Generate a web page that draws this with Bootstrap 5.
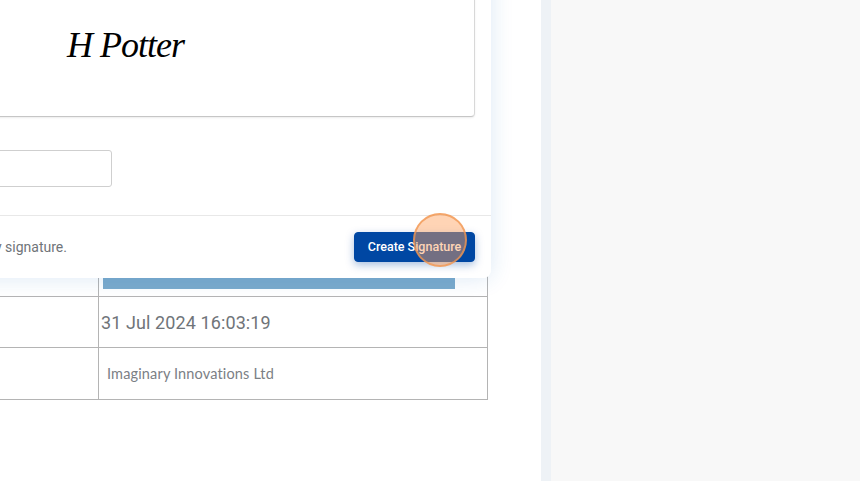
<!DOCTYPE html>
<html lang="en">

<head>
    <meta charset="UTF-8">
    <meta name="viewport" content="width=device-width, initial-scale=1">
    <title>Create Signature</title>
    <link href="https://cdn.jsdelivr.net/npm/bootstrap@5.3.3/dist/css/bootstrap.min.css" rel="stylesheet">
    <style>
        body { height: 481px; overflow: hidden; background: #f8f8f8; font-family: "Roboto", sans-serif; }
        .doc-area { width: 541px; height: 481px; flex: none; overflow: hidden; background: #fff; }
        .doc-strip { width: 10px; flex: none; background: #eef2f6; }
        .doc-table-wrap { margin-left: -200px; width: 688px; padding-top: 60px; }
        .doc-table { table-layout: fixed; width: 688px; margin: 0; border-color: #b4b4b4; }
        .doc-table td { padding: 0; border-color: #b4b4b4; color: #6f7479; }
        .doc-table tr:last-child td { border-bottom-color: #cfcfcf; }
        .cell-first { width: 298px; }
        .sig-bar-row td { height: 236px; vertical-align: bottom; padding: 0 32px 7px 4px !important; }
        .sig-bar { height: 200px; background: #7baacc; }
        .date-cell { height: 51px; padding-left: 2px !important; vertical-align: middle; font-size: 18px; letter-spacing: .1px; }
        .company-cell { height: 52px; padding-left: 8px !important; vertical-align: middle; font-family: "Lato", sans-serif; font-size: 14.5px; letter-spacing: .15px; color: #7b8085 !important; }
        .sig-modal { top: -40px; left: -300px; width: 791px; border: 0; border-radius: 8px; box-shadow: 0 0 22px rgba(30, 110, 190, .16); }
        .sig-modal .card-body { padding: 14px 16px 28px; }
        .sig-box { height: 143px; border: 1px solid #d8d8d8; border-bottom-color: #c6c6c6; border-radius: 4px; padding-left: 350px; padding-bottom: 2px; box-shadow: 0 1px 2px rgba(0, 0, 0, .08); }
        .sig-text { font-family: "Liberation Serif", cursive; font-style: italic; font-size: 36px; color: #000; letter-spacing: -1px; }
        .sig-input { width: 396px; height: 37px; margin-top: 33px; border-color: #cfcfcf; border-radius: 3px; }
        .sig-footer { height: 63px; padding: 0 16px; background: #fff; border-top: 1px solid #e8e8e8; border-radius: 0 0 8px 8px !important; }
        .sig-note { width: 351px; font-size: 14px; color: #6f7479; }
        .btn-sign { width: 121px; height: 30px; padding: 0; font-size: 12.5px; font-weight: 500; background: #0047a3; border-color: #0047a3; border-radius: 4px; box-shadow: 0 3px 8px rgba(0, 71, 163, .35); }
        .click-spot { top: 213px; left: 413px; width: 54px; height: 54px; border-radius: 50%; background: rgba(255, 160, 90, .45); border: 2px solid rgba(240, 150, 80, .75); }
    </style>
</head>

<body class="d-flex">
    <div class="doc-area position-relative">
        <div class="doc-table-wrap">
            <table class="table table-bordered doc-table">
                <tbody>
                    <tr class="sig-bar-row">
                        <td class="cell-first"></td>
                        <td>
                            <div class="sig-bar"></div>
                        </td>
                    </tr>
                    <tr>
                        <td></td>
                        <td class="date-cell">31 Jul 2024 16:03:19</td>
                    </tr>
                    <tr>
                        <td></td>
                        <td class="company-cell">Imaginary Innovations Ltd</td>
                    </tr>
                </tbody>
            </table>
        </div>

        <div class="card sig-modal position-absolute">
            <div class="card-body">
                <div class="sig-box d-flex align-items-center">
                    <span class="sig-text">H Potter</span>
                </div>
                <input type="text" class="form-control sig-input">
            </div>
            <div class="card-footer sig-footer d-flex align-items-center justify-content-between">
                <div class="sig-note text-end">I agree this is my signature.</div>
                <button class="btn btn-primary btn-sign">Create Signature</button>
            </div>
        </div>

        <div class="click-spot position-absolute"></div>
    </div>
    <div class="doc-strip"></div>
    <div class="flex-grow-1"></div>

    <script src="https://cdn.jsdelivr.net/npm/bootstrap@5.3.3/dist/js/bootstrap.bundle.min.js"></script>
</body>

</html>
